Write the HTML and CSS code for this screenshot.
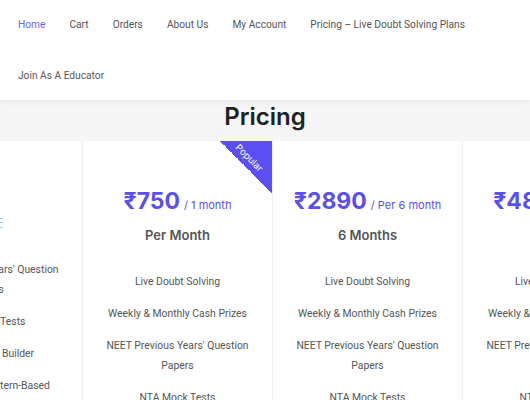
FILE: index.html
```html
<!DOCTYPE html>
<html>
<head>
<meta charset="utf-8">
<link rel="stylesheet" href="styles.css">
</head>
<body>
<header class="site-header">
  <ul class="menu">
    <li><a class="active" href="#">Home</a></li>
    <li><a href="#">Cart</a></li>
    <li><a href="#">Orders</a></li>
    <li><a href="#">About Us</a></li>
    <li><a href="#">My Account</a></li>
    <li><a href="#">Pricing – Live Doubt Solving Plans</a></li>
    <li><a href="#">Join As A Educator</a></li>
  </ul>
</header>
<section class="pricing">
  <h1 class="title">Pricing</h1>
  <div class="cards">
    <div class="card card-left">
      <div class="tag">FREE</div>
      <ul class="features">
        <li>NEET Previous Years' Question Papers</li>
        <li>NTA Mock Tests</li>
        <li>Custom Test Builder</li>
        <li>Latest NEET Pattern-Based</li>
      </ul>
    </div>
    <div class="card">
      <div class="ribbon"><span>Popular</span></div>
      <div class="price"><span class="amount">₹750</span><span class="period">/ 1 month</span></div>
      <div class="plan">Per Month</div>
      <ul class="features">
        <li>Live Doubt Solving</li>
        <li>Weekly &amp; Monthly Cash Prizes</li>
        <li>NEET Previous Years' Question Papers</li>
        <li>NTA Mock Tests</li>
      </ul>
    </div>
    <div class="card">
      <div class="price"><span class="amount">₹2890</span><span class="period">/ Per 6 month</span></div>
      <div class="plan">6 Months</div>
      <ul class="features">
        <li>Live Doubt Solving</li>
        <li>Weekly &amp; Monthly Cash Prizes</li>
        <li>NEET Previous Years' Question Papers</li>
        <li>NTA Mock Tests</li>
      </ul>
    </div>
    <div class="card">
      <div class="price"><span class="amount">₹4890</span><span class="period">/ Per year</span></div>
      <div class="plan">1 Year</div>
      <ul class="features">
        <li>Live Doubt Solving</li>
        <li>Weekly &amp; Monthly Cash Prizes</li>
        <li>NEET Previous Years' Question Papers</li>
        <li>NTA Mock Tests</li>
      </ul>
    </div>
  </div>
</section>
</body>
</html>
```
FILE: styles.css
```css
html, body {
  margin: 0;
  padding: 0;
  background: #fff;
  overflow: hidden;
  width: 530px;
  height: 400px;
}
body {
  font-family: Roboto, "Liberation Sans", sans-serif;
  color: #555;
}
.site-header {
  position: relative;
  z-index: 2;
  background: #fff;
  height: 100px;
  box-shadow: 0 2px 6px rgba(0,0,0,0.06);
}
.menu {
  list-style: none;
  margin: 0;
  padding: 0 0 0 18px;
  display: flex;
  flex-wrap: wrap;
  column-gap: 24px;
}
.menu a {
  display: block;
  line-height: 19px;
  padding: 15px 0 17px;
  font-size: 10.2px;
  color: #555;
  text-decoration: none;
}
.menu a.active {
  color: #6c63ff;
}
.pricing {
  background: #f5f5f5;
}
.title {
  margin: 0;
  padding: 2px 0 9px;
  text-align: center;
  font-family: Inter, "Noto Sans", sans-serif;
  font-weight: 600;
  font-size: 24px;
  line-height: 30px;
  color: #222;
}
.cards {
  display: flex;
  margin-left: -107px;
  background: #fff;
}
.card {
  position: relative;
  flex: 0 0 190px;
  box-sizing: border-box;
  border-right: 1px solid #eee;
  padding: 45px 8px 0;
  text-align: center;
  height: 260px;
  overflow: hidden;
}
.card-left {
  padding-top: 72px;
}
.tag {
  text-align: center;
  font-family: Inter, sans-serif;
  font-size: 13px;
  line-height: 20px;
  color: #8ec8f2;
  margin-bottom: 27px;
}
.ribbon {
  position: absolute;
  top: 0;
  right: 0;
  width: 52px;
  height: 52px;
  background: linear-gradient(to bottom left, #5b4ef2 50%, transparent 50%);
}
.ribbon span {
  position: absolute;
  left: 29px;
  top: 17px;
  transform: translate(-50%, -50%) rotate(45deg);
  font-family: Inter, sans-serif;
  font-size: 9.5px;
  line-height: 12px;
  color: #fff;
}
.price {
  line-height: 30px;
  color: #5a4ff0;
  white-space: nowrap;
}
.amount {
  font-family: Inter, "Noto Sans", sans-serif;
  font-weight: 700;
  font-size: 23px;
}
.period {
  font-family: Inter, sans-serif;
  font-size: 11px;
  margin-left: 4px;
}
.plan {
  margin-top: 5px;
  font-family: Inter, sans-serif;
  font-weight: 600;
  font-size: 13px;
  line-height: 20px;
  color: #555;
}
.features {
  list-style: none;
  margin: 27px 0 0;
  padding: 0;
  font-size: 10.4px;
  line-height: 20px;
}
.features li {
  margin-bottom: 12px;
}
.card-left .features {
  margin-top: 0;
}
```
